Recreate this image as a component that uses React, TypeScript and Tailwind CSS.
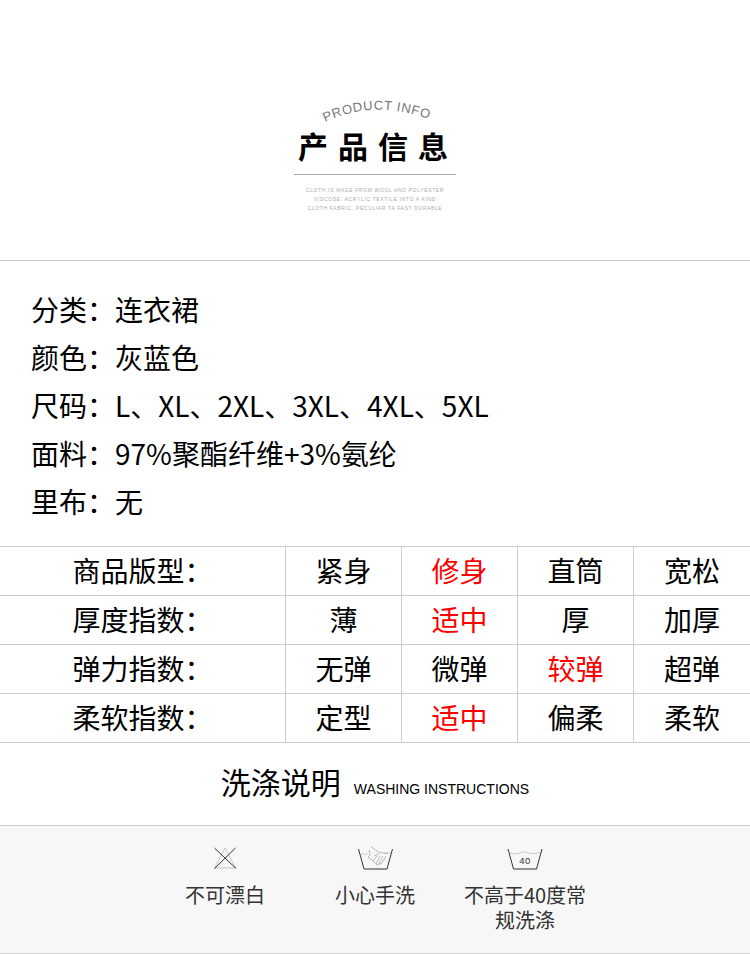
const latin = "font-['Liberation_Sans','Noto_Sans_CJK_SC',sans-serif]";
const cjk = "font-['Noto_Sans_CJK_SC',sans-serif]";

const specs = [
  ["分类", "连衣裙"],
  ["颜色", "灰蓝色"],
  ["尺码", "L、XL、2XL、3XL、4XL、5XL"],
  ["面料", "97%聚酯纤维+3%氨纶"],
  ["里布", "无"],
];

const rows = [
  { label: "商品版型：", options: ["紧身", "修身", "直筒", "宽松"], active: 1 },
  { label: "厚度指数：", options: ["薄", "适中", "厚", "加厚"], active: 1 },
  { label: "弹力指数：", options: ["无弹", "微弹", "较弹", "超弹"], active: 2 },
  { label: "柔软指数：", options: ["定型", "适中", "偏柔", "柔软"], active: 1 },
];

function NoBleach() {
  return (
    <svg width="24" height="24" viewBox="0 0 24 24" fill="none">
      <path d="M12 2 L1.5 22 H22.5 Z" stroke="#bbb" strokeWidth="0.8" />
      <path d="M1.5 2 L23 22.5 M22.5 2 L1.5 22.5" stroke="#333" strokeWidth="1" />
    </svg>
  );
}

function HandWash() {
  return (
    <svg width="36" height="24" viewBox="0 0 36 24" fill="none">
      <path d="M1.5 3 L7 23 H30 L35.5 3" stroke="#333" strokeWidth="1" />
      <path d="M2.5 8 H11 M27 7 H34" stroke="#bbb" strokeWidth="0.7" />
      <path
        d="M14 0.5 L22 6.5 L31 7.5 M12 4 L13 9 L11 11 L15 14 L20 19 L25 17 L29 10 M17 10 L22 8 M19 18 L23 10 M22 18 L26 10 M16 15 L20 10"
        stroke="#aaa"
        strokeWidth="0.8"
      />
    </svg>
  );
}

function Wash40() {
  return (
    <svg width="36" height="24" viewBox="0 0 36 24" fill="none">
      <path d="M1 3 L6.5 23 H29.5 L35 3" stroke="#333" strokeWidth="1" />
      <path d="M2.5 7 C6 8 9 8.5 13 7 C17 5 20 6.5 24 7.5 C28 8 31 7 34 6" stroke="#bbb" strokeWidth="0.8" />
      <text x="18" y="17.5" textAnchor="middle" fontSize="9.5" letterSpacing="0.5" fill="#333" fontFamily="Liberation Sans, sans-serif">
        40
      </text>
    </svg>
  );
}

const care = [
  { icon: <NoBleach />, text: "不可漂白" },
  { icon: <HandWash />, text: "小心手洗" },
  { icon: <Wash40 />, text: "不高于40度常规洗涤" },
];

export default function App() {
  return (
    <div className={`w-[750px] h-[954px] bg-white text-black overflow-hidden ${cjk}`}>
      <header className="h-[261px] border-b border-[#ccc] flex flex-col items-center pt-[94px]">
        <svg width="120" height="34" viewBox="0 0 120 34" className="-mb-[4px] ml-[2px]">
          <path id="curve" d="M9 28 Q60 4 118 27" fill="none" />
          <text fontSize="13" fill="#777" fontFamily="Liberation Sans, sans-serif" letterSpacing="0.7">
            <textPath href="#curve">PRODUCT INFO</textPath>
          </text>
        </svg>
        <h1 className="text-[30px] leading-[42px] font-bold tracking-[10px] -mr-[6px]">产品信息</h1>
        <div className="w-[162px] border-t border-[#aaa] mt-[8px]" />
        <div className={`mt-[11px] text-[5px] leading-[9px] tracking-[0.65px] text-[#aaa] text-center whitespace-pre-line ${latin}`}>
          {"CLOTH IS MADE FROM WOOL AND POLYESTER\nVISCOSE, ACRYLIC TEXTILE INTO A KIND\nCLOTH FABRIC. PECULIAR TA FAST DURABLE"}
        </div>
      </header>

      <section className="h-[285px] pt-[24px] pl-[31px] text-[28px] leading-[48px]">
        {specs.map(([k, v]) => (
          <div key={k}>
            {k}：{v}
          </div>
        ))}
      </section>

      <section className="border-t border-[#ccc]">
        {rows.map((row) => (
          <div key={row.label} className="grid grid-cols-[286px_116px_116px_116px_116px] h-[49px] border-b border-[#ccc] text-[28px] leading-[46px] text-center">
            <div className="border-r border-[#ccc]">{row.label}</div>
            {row.options.map((opt, i) => (
              <div key={i} className={`${i < 3 ? "border-r border-[#ccc]" : ""} ${i === row.active ? "text-[#ff0000]" : ""}`}>
                {opt}
              </div>
            ))}
          </div>
        ))}
      </section>

      <section className="h-[82px] flex items-center justify-center gap-[13px] pb-[5px]">
        <span className="text-[30px]">洗涤说明</span>
        <span className={`text-[14px] mt-[15px] ${latin}`}>WASHING INSTRUCTIONS</span>
      </section>

      <section className="h-[129px] bg-[#f7f7f7] border-y border-[#ccc] flex justify-center pt-[20px]">
        {care.map((c) => (
          <div key={c.text} className="w-[150px] flex flex-col items-center">
            <div className="h-[24px] flex items-center justify-center">{c.icon}</div>
            <p className="mt-[12px] w-[130px] text-[20px] leading-[25px] text-center text-[#333]">{c.text}</p>
          </div>
        ))}
      </section>
    </div>
  );
}
